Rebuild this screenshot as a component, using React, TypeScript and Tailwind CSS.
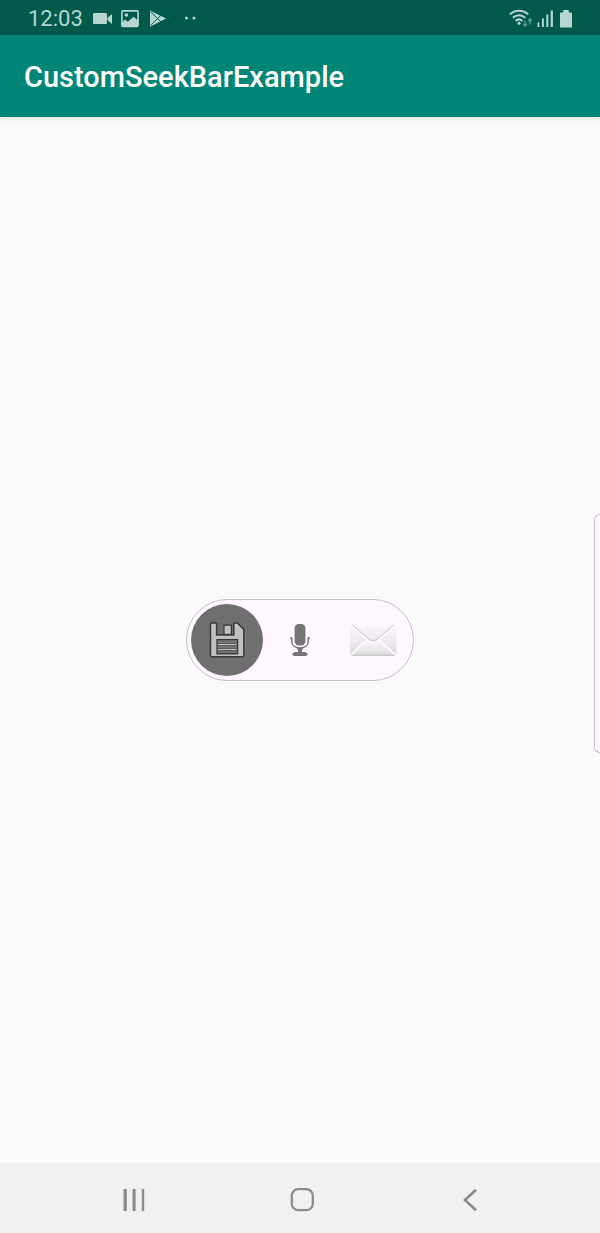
import { useState } from 'react';
import type { ReactNode } from 'react';

function StatusBar() {
  return (
    <div className="flex h-[35px] items-center justify-between bg-[#005a4c] pt-0.5 pr-7 pl-7 text-[#b8d6d0]">
      <div className="flex items-center">
        <span className="text-[22px] leading-8">12:03</span>
        <svg className="ml-2.5 h-[18px] w-5" viewBox="0 0 20 18" fill="currentColor" aria-hidden="true">
          <rect x="0" y="3" width="14" height="11" rx="1" />
          <path d="M14.5 8 19 4v10l-4.5-4z" />
        </svg>
        <svg className="ml-2 h-[18px] w-[18px]" viewBox="0 0 18 18" aria-hidden="true">
          <rect x="0.9" y="0.9" width="16.2" height="15.6" rx="1" fill="none" stroke="currentColor" strokeWidth="1.6" />
          <circle cx="5.4" cy="5" r="1.8" fill="currentColor" />
          <path d="M1 16v-3.6l3-2.8 2.8 2.2 5.8-5 4.4 3.8V16z" fill="currentColor" />
        </svg>
        <svg className="ml-2.5 h-[18px] w-[18px]" viewBox="0 0 18 18" aria-hidden="true">
          <path d="M1 .4 17 8.6 1 16.8z" fill="currentColor" />
          <path d="M1.5 1.6 12 12M1.5 15.6 12 5.2" fill="none" stroke="#005a4c" strokeWidth="1" />
        </svg>
        <svg className="ml-4 h-[18px] w-4" viewBox="0 0 16 18" fill="currentColor" aria-hidden="true">
          <circle cx="3.5" cy="8" r="1.5" />
          <circle cx="11" cy="8" r="1.5" />
        </svg>
      </div>
      <div className="flex items-center">
        <svg className="h-5 w-6" viewBox="0 0 24 20" fill="none" stroke="currentColor" strokeWidth="2" aria-hidden="true">
          <path d="M.8 5.4C6 .4 14 .4 19.2 5.4M3.8 8.8c3.6-3.4 8.8-3.4 12.4 0M6.6 12c2-1.9 4.8-1.9 6.8 0" />
          <circle cx="10" cy="14.2" r="1.5" fill="currentColor" stroke="none" />
          <path d="M16 11.5v5.5m-2-2 2 2 2-2M21 15.5V10m-2 2 2-2 2 2" stroke="#5d9488" strokeWidth="1.6" />
        </svg>
        <svg className="ml-1 h-[18px] w-4" viewBox="0 0 16 18" fill="currentColor" aria-hidden="true">
          <rect x="0.5" y="12.5" width="1.8" height="4.5" />
          <rect x="5" y="8.5" width="1.9" height="8.5" />
          <rect x="9.3" y="4.5" width="2" height="12.5" />
          <rect x="13.7" y="0.5" width="2.2" height="16.5" />
        </svg>
        <svg className="ml-[7px] h-[18px] w-3" viewBox="0 0 12 18" fill="currentColor" aria-hidden="true">
          <path d="M3.2-.5h5.6v3H12v15H0v-15h3.2z" />
        </svg>
      </div>
    </div>
  );
}

function SaveIcon() {
  return (
    <svg className="h-9 w-9" viewBox="0 0 36 36" aria-hidden="true">
      <path
        d="M2.6 1H6.6Q7.6 1 7.6 2V13H24.8V2Q24.8 1 25.8 1H28.4L34.8 7.4V33.2Q34.8 34.8 33.2 34.8H3Q1.5 34.8 1.5 33.2V2.2Q1.5 1 2.6 1z"
        fill="#c1c1c1"
        stroke="#383838"
        strokeWidth="1.5"
      />
      <path d="M15 3.2h7.4v9.2H15z" fill="#c1c1c1" stroke="#383838" strokeWidth="1.2" />
      <rect x="8" y="17.6" width="20.6" height="14.2" fill="#747474" stroke="#383838" strokeWidth="1.3" />
      <path d="M9 22.6h18.6M9 27.6h18.6" stroke="#383838" strokeWidth="3" />
      <path d="M9 22.6h18.6M9 27.6h18.6" stroke="#c1c1c1" strokeWidth="1.5" />
    </svg>
  );
}

function MicIcon() {
  return (
    <svg className="h-8 w-5" viewBox="0 0 20 32" aria-hidden="true">
      <rect x="4.6" y="0" width="10.8" height="21.5" rx="4.2" fill="#757575" />
      <path
        d="M.2 14h1.6v3.6c0 3.9 3.4 6.4 8.2 6.4s8.2-2.5 8.2-6.4V14h1.6"
        fill="none"
        stroke="#757575"
        strokeWidth="1.5"
      />
      <path d="M7 24h6l-1.4 4h3.2q2.8.3 2.8 2 0 2-2.8 2H5.2q-2.8 0-2.8-2 0-1.7 2.8-2h3.2z" fill="#757575" />
    </svg>
  );
}

function MailIcon() {
  return (
    <svg className="h-8 w-12" viewBox="0 0 48 32" aria-hidden="true">
      <defs>
        <linearGradient id="paper" x1="0" y1="0" x2="0" y2="1">
          <stop offset="0" stopColor="#faf6fa" />
          <stop offset="0.6" stopColor="#ebe9eb" />
          <stop offset="1" stopColor="#d9d8d9" />
        </linearGradient>
        <linearGradient id="flap" x1="0" y1="0" x2="0" y2="1">
          <stop offset="0" stopColor="#fbf7fb" />
          <stop offset="1" stopColor="#ebe9eb" />
        </linearGradient>
      </defs>
      <path d="M1 2 17 15.5 1 30.5zM47.5 2 31 15.5l16.5 15z" fill="url(#paper)" />
      <path d="M3 31.5 18 17q6 5 12 0l15.5 14.5z" fill="url(#paper)" />
      <path d="M3.5 0.5 20 14.8q4 3 8 0L45 .5z" fill="url(#flap)" />
      <path d="M3.5 .8 20 15.3q4 3.2 8 0L45 .8" fill="none" stroke="#c4c2c4" strokeWidth="1" />
      <path d="M2.5 31.3H46" stroke="#c2c1c2" strokeWidth="1" />
    </svg>
  );
}

const options: { name: string; icon: ReactNode }[] = [
  { name: 'Save', icon: <SaveIcon /> },
  { name: 'Record', icon: <MicIcon /> },
  { name: 'Mail', icon: <MailIcon /> },
];

function SeekBar() {
  const [selected, setSelected] = useState(0);
  return (
    <div role="group" aria-label="Mode" className="flex gap-px rounded-full border border-[#c4c2c4] bg-[#fef7ff] p-1">
      {options.map((option, index) => (
        <button
          key={option.name}
          type="button"
          aria-label={option.name}
          aria-pressed={index === selected}
          onClick={() => setSelected(index)}
          className={
            index === selected
              ? 'flex h-18 w-18 items-center justify-center rounded-full bg-[#6f6f6f]'
              : 'flex h-18 w-18 items-center justify-center rounded-full'
          }
        >
          {option.icon}
        </button>
      ))}
    </div>
  );
}

function NavigationBar() {
  return (
    <nav className="grid h-[70px] grid-cols-3 bg-[#f1f1f1] pt-1 pr-11 pl-12 text-[#8b8b8b]">
      <button type="button" aria-label="Recent apps" className="flex items-center justify-center">
        <svg className="h-6 w-6" viewBox="0 0 24 24" fill="currentColor" aria-hidden="true">
          <rect x="2.5" y="1" width="3.4" height="22" rx="0.6" />
          <rect x="11.6" y="1" width="3" height="22" rx="0.6" />
          <rect x="20.8" y="1" width="2.4" height="22" rx="0.6" />
        </svg>
      </button>
      <button type="button" aria-label="Home" className="flex items-center justify-center">
        <svg className="h-6 w-6" viewBox="0 0 24 24" fill="none" stroke="currentColor" strokeWidth="2.2" aria-hidden="true">
          <rect x="1.8" y="1.2" width="21" height="21" rx="6.5" />
        </svg>
      </button>
      <button type="button" aria-label="Back" className="flex items-center justify-center">
        <svg className="h-6 w-6" viewBox="0 0 24 24" fill="none" stroke="currentColor" strokeWidth="2.6" aria-hidden="true">
          <path d="M17 1.8 6 12l11 10.2" />
        </svg>
      </button>
    </nav>
  );
}

export default function App() {
  return (
    <div className="flex min-h-screen flex-col bg-[#fafafa] font-['Roboto',sans-serif]">
      <StatusBar />
      <header className="z-10 flex h-[82px] items-center bg-[#008577] px-6 pt-0.5 shadow-[0_2px_4px_rgba(0,0,0,0.08)]">
        <h1 className="text-[29px] leading-10 font-medium text-white">CustomSeekBarExample</h1>
      </header>
      <main className="relative flex grow items-center justify-center">
        <SeekBar />
        <div className="absolute top-[38%] right-0 h-[239px] w-1.5 rounded-l-lg border border-r-0 border-[#c4c2c4] bg-[#fef7ff]" />
      </main>
      <NavigationBar />
    </div>
  );
}
